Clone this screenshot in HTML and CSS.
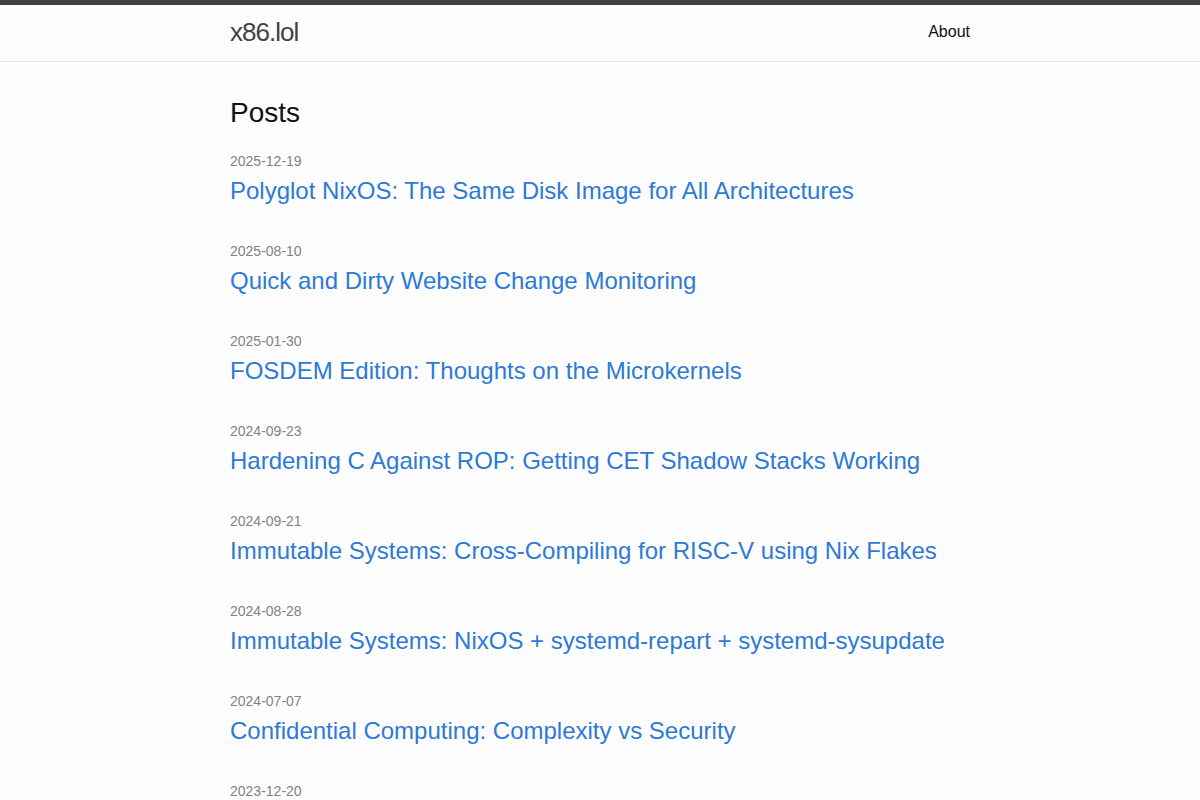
FILE: index.html
```html
<!DOCTYPE html>
<html lang="en">
<head>
    <meta charset="UTF-8">
    <meta name="viewport" content="width=device-width, initial-scale=1.0">
    <title>x86.lol</title>
    <link rel="stylesheet" href="styles.css">
</head>
<body>
    <header class="site-header">
        <div class="wrapper header-inner">
            <a class="site-title" href="#">x86.lol</a>
            <nav class="site-nav">
                <a class="page-link" href="#">About</a>
            </nav>
        </div>
    </header>

    <main class="page-content">
        <div class="wrapper">
            <h1 class="page-heading">Posts</h1>
            <ul class="post-list">
                <li>
                    <span class="post-meta">2025-12-19</span>
                    <h3><a class="post-link" href="#">Polyglot NixOS: The Same Disk Image for All Architectures</a></h3>
                </li>
                <li>
                    <span class="post-meta">2025-08-10</span>
                    <h3><a class="post-link" href="#">Quick and Dirty Website Change Monitoring</a></h3>
                </li>
                <li>
                    <span class="post-meta">2025-01-30</span>
                    <h3><a class="post-link" href="#">FOSDEM Edition: Thoughts on the Microkernels</a></h3>
                </li>
                <li>
                    <span class="post-meta">2024-09-23</span>
                    <h3><a class="post-link" href="#">Hardening C Against ROP: Getting CET Shadow Stacks Working</a></h3>
                </li>
                <li>
                    <span class="post-meta">2024-09-21</span>
                    <h3><a class="post-link" href="#">Immutable Systems: Cross-Compiling for RISC-V using Nix Flakes</a></h3>
                </li>
                <li>
                    <span class="post-meta">2024-08-28</span>
                    <h3><a class="post-link" href="#">Immutable Systems: NixOS + systemd-repart + systemd-sysupdate</a></h3>
                </li>
                <li>
                    <span class="post-meta">2024-07-07</span>
                    <h3><a class="post-link" href="#">Confidential Computing: Complexity vs Security</a></h3>
                </li>
                <li>
                    <span class="post-meta">2023-12-20</span>
                    <h3><a class="post-link" href="#">Living Without a Desktop Environment</a></h3>
                </li>
            </ul>
        </div>
    </main>
</body>
</html>
```

FILE: styles.css
```css
body {
    margin: 0;
    font-family: "Helvetica Neue", Helvetica, "Liberation Sans", Arial, sans-serif;
    font-size: 16px;
    line-height: 1.5;
    color: #111;
    background-color: #fdfdfd;
}

a {
    text-decoration: none;
}

.wrapper {
    max-width: 740px;
    margin: 0 auto;
    padding: 0 30px;
}

.site-header {
    border-top: 5px solid #424242;
    border-bottom: 1px solid #e8e8e8;
    min-height: 56px;
}

.header-inner {
    display: flex;
    justify-content: space-between;
    align-items: center;
    height: 54px;
    padding-bottom: 2px;
}

.site-title {
    font-size: 26px;
    letter-spacing: -1px;
    line-height: 56px;
    color: #424242;
}

.page-link {
    color: #111;
    line-height: 1.5;
}

.page-content {
    padding: 30px 0;
}

.page-heading {
    font-size: 28px;
    font-weight: normal;
    line-height: 1.5;
    margin: 0 0 17px;
}

.post-list {
    list-style: none;
    margin: 0;
    padding: 0;
}

.post-list li {
    margin-bottom: 32px;
}

.post-meta {
    display: block;
    font-size: 14px;
    line-height: 21px;
    margin-bottom: 1px;
    color: #828282;
}

.post-list h3 {
    margin: 0;
    font-weight: normal;
    font-size: 24px;
    line-height: 36px;
}

.post-link {
    color: #2d7ad6;
}
```
